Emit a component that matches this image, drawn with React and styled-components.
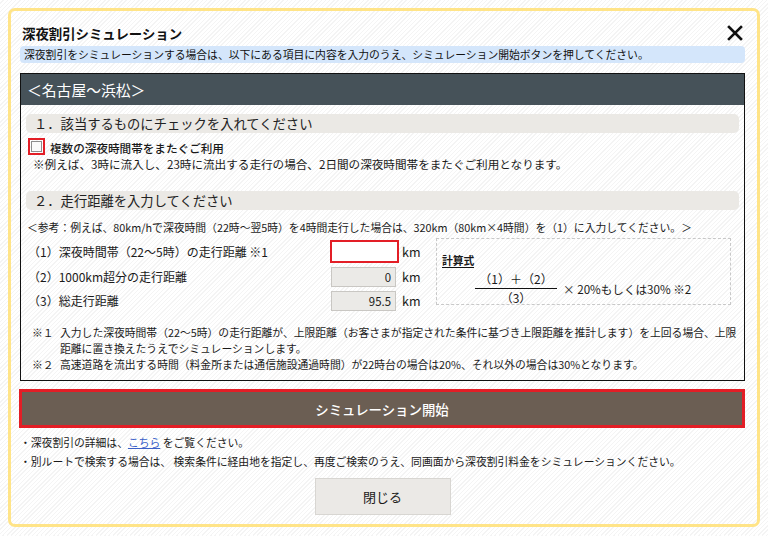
import React from 'react'
import styled, { createGlobalStyle } from 'styled-components'

const GlobalStyle = createGlobalStyle`
    body {
        margin: 0;
        padding: 8px;
        font-family: "Noto Sans CJK JP", "Noto Sans", sans-serif;
        color: #1a1a1a;
        background: repeating-linear-gradient(135deg, #ffffff 0 2px, #f4f4f4 2px 3px);
    }
`

function CloseIcon() {
    return (
        <svg width="16" height="16" viewBox="0 0 16 16">
            <path d="M2 2 L14 14 M14 2 L2 14" stroke="#111" strokeWidth="2.6" strokeLinecap="square" />
        </svg>
    )
}

function App() {
    return (
        <>
            <GlobalStyle />
            <Modal>
                <TitleRow>
                    <Title>深夜割引シミュレーション</Title>
                    <CloseButton><CloseIcon /></CloseButton>
                </TitleRow>
                <SubBar>深夜割引をシミュレーションする場合は、以下にある項目に内容を入力のうえ、シミュレーション開始ボタンを押してください。</SubBar>

                <SectionBox>
                    <RouteHeader>＜名古屋〜浜松＞</RouteHeader>
                    <SectionBody>
                        <StepBar>１．該当するものにチェックを入れてください</StepBar>
                        <CheckRow>
                            <CheckFrame><CheckInner /></CheckFrame>
                            <CheckLabel>複数の深夜時間帯をまたぐご利用</CheckLabel>
                        </CheckRow>
                        <Note>※例えば、3時に流入し、23時に流出する走行の場合、2日間の深夜時間帯をまたぐご利用となります。</Note>

                        <StepBar top={19}>２．走行距離を入力してください</StepBar>
                        <RefLine>＜参考：例えば、80km/hで深夜時間（22時〜翌5時）を4時間走行した場合は、320km（80km×4時間）を（1）に入力してください。＞</RefLine>

                        <InputArea>
                            <Rows>
                                <Row>
                                    <RowLabel>（1）深夜時間帯（22〜5時）の走行距離 ※1</RowLabel>
                                    <EditBox />
                                    <Unit>km</Unit>
                                </Row>
                                <Row>
                                    <RowLabel>（2）1000km超分の走行距離</RowLabel>
                                    <ReadBox>0</ReadBox>
                                    <Unit>km</Unit>
                                </Row>
                                <Row>
                                    <RowLabel>（3）総走行距離</RowLabel>
                                    <ReadBox>95.5</ReadBox>
                                    <Unit>km</Unit>
                                </Row>
                            </Rows>
                            <FormulaBox>
                                <FormulaTitle>計算式</FormulaTitle>
                                <FormulaRow>
                                    <Fraction>
                                        <Numerator>（1）＋（2）</Numerator>
                                        <Denominator>（3）</Denominator>
                                    </Fraction>
                                    <Multiplier>× 20%もしくは30% ※2</Multiplier>
                                </FormulaRow>
                            </FormulaBox>
                        </InputArea>

                        <Notes>
                            <Mark>※１</Mark>
                            <NoteText>入力した深夜時間帯（22〜5時）の走行距離が、上限距離（お客さまが指定された条件に基づき上限距離を推計します）を上回る場合、上限<br />距離に置き換えたうえでシミュレーションします。</NoteText>
                            <Mark>※２</Mark>
                            <NoteText>高速道路を流出する時間（料金所または通信施設通過時間）が22時台の場合は20%、それ以外の場合は30%となります。</NoteText>
                        </Notes>
                    </SectionBody>
                </SectionBox>

                <StartButton>シミュレーション開始</StartButton>

                <Bullets>
                    <li>・深夜割引の詳細は、<Link>こちら</Link> をご覧ください。</li>
                    <li>・別ルートで検索する場合は、 検索条件に経由地を指定し、再度ご検索のうえ、同画面から深夜割引料金をシミュレーションください。</li>
                </Bullets>

                <Footer>
                    <CloseTextButton>閉じる</CloseTextButton>
                </Footer>
            </Modal>
        </>
    )
}

export default App

const Modal = styled.div`
    width: 752px;
    box-sizing: border-box;
    border: 3px solid #ffe488;
    border-radius: 7px;
    padding: 0 12px 9px 9px;
`

const TitleRow = styled.div`
    display: flex;
    justify-content: space-between;
    align-items: center;
    padding-top: 12px;
    height: 20px;
    margin-bottom: 3px;
`

const Title = styled.h1`
    margin: 0 0 0 2px;
    font-size: 13.4px;
    font-weight: bold;
    line-height: 20px;
    color: #111;
`

const CloseButton = styled.div`
    display: flex;
    margin-right: 2px;
    cursor: pointer;
`

const SubBar = styled.div`
    background: #d4e6fb;
    border-radius: 4px;
    height: 17px;
    line-height: 17px;
    font-size: 10.8px;
    padding-left: 4px;
    color: #111;
`

const SectionBox = styled.div`
    margin-top: 10px;
    border: 1px solid #111;
`

const RouteHeader = styled.div`
    background: #465259;
    color: #fff;
    height: 31px;
    line-height: 31px;
    font-size: 14.8px;
    padding-left: 6px;
`

const SectionBody = styled.div`
    padding: 0 5px 8px 5px;
`

const StepBar = styled.div`
    margin-top: ${props => props.top || 9}px;
    background: #ebe9e5;
    border-radius: 5px;
    height: 19px;
    line-height: 19px;
    font-size: 13.3px;
    padding-left: 8px;
    color: #222;
`

const CheckRow = styled.div`
    display: flex;
    align-items: center;
    margin-top: 5px;
    margin-left: 2px;
    height: 17px;
`

const CheckFrame = styled.div`
    width: 17px;
    height: 17px;
    box-sizing: border-box;
    border: 2px solid #e31e26;
    display: flex;
    align-items: center;
    justify-content: center;
`

const CheckInner = styled.div`
    width: 11px;
    height: 11px;
    box-sizing: border-box;
    border: 1px solid #8e8e8e;
    background: #fbfbfb;
`

const CheckLabel = styled.span`
    margin-left: 5px;
    font-size: 11.6px;
    font-weight: 500;
    line-height: 17px;
    padding-top: 3px;
`

const Note = styled.div`
    margin-top: 1px;
    padding-left: 7px;
    font-size: 11.6px;
    line-height: 16px;
`

const RefLine = styled.div`
    margin-top: 9px;
    padding-left: 1px;
    font-size: 10.8px;
    line-height: 16px;
`

const InputArea = styled.div`
    display: flex;
    margin-top: 3px;
`

const Rows = styled.div`
    display: flex;
    flex-direction: column;
    gap: 4px;
    padding-top: 2px;
    width: 410px;
`

const Row = styled.div`
    display: flex;
    align-items: center;
    min-height: 20px;
`

const RowLabel = styled.span`
    width: 302px;
    padding-left: 2px;
    font-size: 12px;
    line-height: 16px;
`

const EditBox = styled.div`
    width: 69px;
    height: 23px;
    box-sizing: border-box;
    border: 2px solid #e31e26;
    background: #fff;
`

const ReadBox = styled.div`
    width: 65px;
    height: 20px;
    margin-left: 1px;
    margin-right: 3px;
    box-sizing: border-box;
    border: 1px solid #c9c7c3;
    background: #ebeae7;
    text-align: right;
    padding-right: 4px;
    font-size: 11.4px;
    line-height: 18px;
`

const Unit = styled.span`
    margin-left: 3px;
    font-size: 12.5px;
    line-height: 16px;
`

const FormulaBox = styled.div`
    width: 295px;
    height: 67px;
    box-sizing: border-box;
    border: 1px dashed #c8c8c8;
    padding: 7px 0 0 5px;
`

const FormulaTitle = styled.div`
    display: inline-block;
    font-size: 10.8px;
    font-weight: bold;
    line-height: 14px;
    border-bottom: 1px solid #111;
`

const FormulaRow = styled.div`
    display: flex;
    align-items: center;
    margin-top: 1px;
    margin-left: 33px;
`

const Fraction = styled.div`
    width: 82px;
    display: flex;
    flex-direction: column;
    align-items: center;
    font-size: 12px;
    line-height: 16px;
`

const Numerator = styled.div`
    width: 100%;
    text-align: center;
    padding-bottom: 1px;
    border-bottom: 1px solid #111;
    margin-bottom: 1px;
`

const Denominator = styled.div`
    text-align: center;
`

const Multiplier = styled.span`
    margin-left: 6px;
    font-size: 11.6px;
`

const Notes = styled.div`
    display: grid;
    grid-template-columns: 28px 1fr;
    margin-top: 13px;
    padding-left: 6px;
    font-size: 10.8px;
    line-height: 16px;
`

const Mark = styled.span``

const NoteText = styled.span``

const StartButton = styled.div`
    margin-top: 8px;
    margin-left: -1px;
    height: 39px;
    box-sizing: border-box;
    border: 3px solid #e31e26;
    background: #6b5e53;
    color: #fff;
    font-size: 13.4px;
    font-weight: 500;
    display: flex;
    justify-content: center;
    align-items: center;
    cursor: pointer;
`

const Bullets = styled.ul`
    list-style: none;
    margin: 5px 0 0 0;
    padding: 0;
    font-size: 10.8px;
    line-height: 19px;
`

const Link = styled.a`
    color: #3a5fc8;
    text-decoration: underline;
    cursor: pointer;
`

const Footer = styled.div`
    display: flex;
    justify-content: center;
    margin-top: 7px;
`

const CloseTextButton = styled.div`
    width: 136px;
    height: 37px;
    box-sizing: border-box;
    border: 1px solid #d8d6d2;
    background: #ebe9e6;
    font-size: 13px;
    display: flex;
    align-items: center;
    justify-content: center;
    cursor: pointer;
`
